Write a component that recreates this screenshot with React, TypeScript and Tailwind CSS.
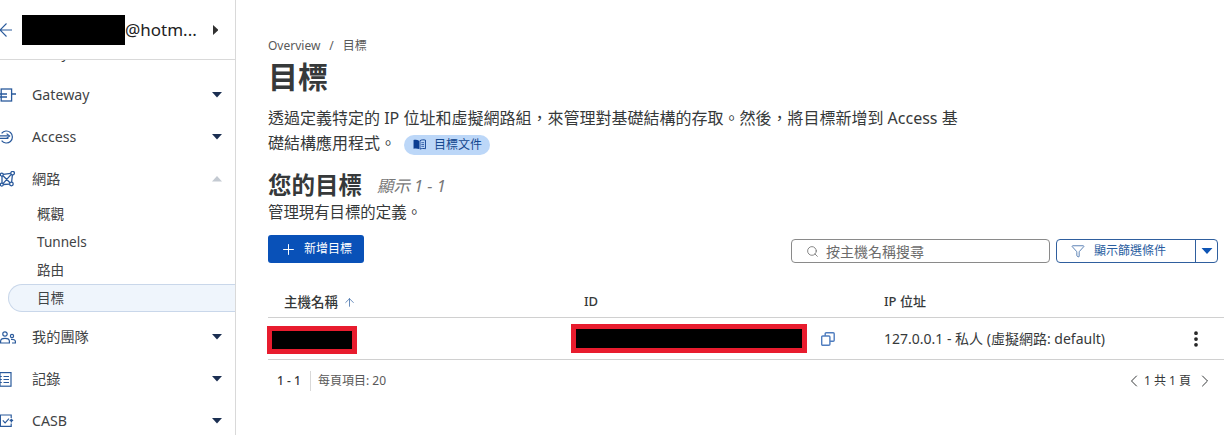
import { ChevronLeft, ChevronRight, Plus, Search, Funnel, ArrowUp, EllipsisVertical } from "lucide-react";

function Caret(props: { dir: "down" | "up" | "right"; className?: string }) {
	const points =
		props.dir === "down" ? "0,0 10,0 5,5.5" : props.dir === "up" ? "0,5.5 10,5.5 5,0" : "0,0 5.5,5 0,10";
	const box = props.dir === "right" ? "0 0 5.5 10" : "0 0 10 5.5";
	return (
		<svg viewBox={box} className={props.className} fill="currentColor">
			<polygon points={points} />
		</svg>
	);
}

function GatewayIcon() {
	return (
		<svg viewBox="0 0 16 14" className="h-[14px] w-[16px]" fill="none" stroke="#2a5a9c" strokeWidth="1.3">
			<rect x="1.2" y="1" width="10.4" height="12" />
			<path d="M0 6h7M0 9h7M11.6 6h4.4" />
		</svg>
	);
}

function AccessIcon() {
	return (
		<svg viewBox="0 0 14 14" className="h-[14px] w-[14px]" fill="none" stroke="#2a5a9c" strokeWidth="1.2">
			<path d="M1.6 3.4A6 6 0 1 1 1.6 10.6" />
			<path d="M0 5.8h8.4M0 8.4h8.4" />
			<path d="M6.6 3.6l3 2.4-3 2.4" />
		</svg>
	);
}

function NetworkIcon() {
	return (
		<svg viewBox="0 0 15 16" className="h-[16px] w-[15px]" fill="none" stroke="#2a5a9c" strokeWidth="1.3">
			<circle cx="1.8" cy="3.6" r="1.5" />
			<circle cx="12.6" cy="2.2" r="1.8" />
			<circle cx="1.8" cy="13.6" r="1.5" />
			<circle cx="11.4" cy="13" r="1.8" />
			<path d="M3.3 3.4L10.8 2.4M2 5.1v7M3.3 13.5l6.3-.4M12.4 4l-.8 7.2M3 4.7l7 7M11.2 3.4L3 12.6" />
		</svg>
	);
}

function TeamIcon() {
	return (
		<svg viewBox="0 0 16 13" className="h-[13px] w-[16px]" fill="none" stroke="#2a5a9c" strokeWidth="1.2">
			<circle cx="5" cy="3" r="2.2" />
			<circle cx="12" cy="5" r="1.6" />
			<path d="M0.6 12v-1.8C0.6 8.4 2.4 7.4 5 7.4s4.4 1 4.4 2.8V12zM11 8.4c2.6-.2 4.4.6 4.4 2V12h-3.4" />
		</svg>
	);
}

function LogIcon() {
	return (
		<svg viewBox="0 0 12 15" className="h-[15px] w-[12px]" fill="none" stroke="#2a5a9c" strokeWidth="1.2">
			<rect x="0" y="0.6" width="11" height="13.6" />
			<path d="M0 4.5h1.8M0 7.5h1.8M0 10.5h1.8M3.5 4.5h5.5M3.5 7.5h5.5M3.5 10.5h5.5" />
		</svg>
	);
}

function CasbIcon() {
	return (
		<svg viewBox="0 0 14 14" className="h-[14px] w-[14px]" fill="none" stroke="#2a5a9c" strokeWidth="1.2">
			<path d="M11.2 4V1H0.4v11.4h10.8v-3" />
			<path d="M2.8 6.4l2.3 2.4 3.9-4.2M11.4 8.6V5.6M9.8 7l1.6-1.6L13 7" />
		</svg>
	);
}

function BookIcon() {
	return (
		<svg viewBox="0 0 14 12" className="h-[11px] w-[13px]">
			<path d="M0.5 1.2C2.4 0.7 4.8 0.8 6.5 1.8V11C4.8 10.2 2.4 10.2 0.5 10.6z" fill="#0b3d91" />
			<path d="M7.5 1.8C9.2 0.8 11.6 0.7 13.5 1.2v9.4C11.6 10.2 9.2 10.2 7.5 11z" fill="none" stroke="#0b3d91" strokeWidth="1" />
			<path d="M9 4h3M9 6h3M9 8h3" stroke="#0b3d91" strokeWidth="0.8" />
		</svg>
	);
}

function CopyIcon() {
	return (
		<svg viewBox="0 0 14 14" className="h-[14px] w-[14px]" fill="none" stroke="#4f7dbf" strokeWidth="1.4">
			<rect x="0.7" y="4" width="8.2" height="9.3" rx="1" />
			<path d="M4.2 4V1.8a1 1 0 0 1 1-1h7a1 1 0 0 1 1 1v6.4a1 1 0 0 1-1 1H9" />
		</svg>
	);
}

function NavRow(props: { label: string; icon?: React.ReactNode; open?: boolean }) {
	return (
		<div className="flex h-[42px] items-center text-[14.2px] text-[#3f4345]">
			<div className="flex w-[32px] shrink-0 items-center">{props.icon}</div>
			<span className="-mt-px flex-1">{props.label}</span>
			<Caret
				dir={props.open ? "up" : "down"}
				className={`mr-[13px] h-[5.5px] w-[10px] ${props.open ? "text-[#c4cad2]" : "text-[#1b2f52]"}`}
			/>
		</div>
	);
}

function SubRow(props: { label: string; active?: boolean }) {
	return (
		<div
			className={`ml-[8px] flex h-[28px] items-center text-[13.6px] text-[#3f4345] ${
				props.active
					? "-mr-px rounded-l-full border border-r-0 border-[#c9d7ea] bg-[#eff5fc] pl-[28px]"
					: "pl-[29px]"
			}`}
		>
			{props.label}
		</div>
	);
}

function Sidebar() {
	return (
		<aside className="flex h-[435px] w-[236px] shrink-0 flex-col overflow-hidden border-r border-[#d9d9d9]">
			<div className="flex h-[60px] shrink-0 items-center border-b border-[#d9d9d9]">
				<svg viewBox="0 0 12 14" className="h-[14px] w-[12px] shrink-0" fill="none" stroke="#2a5a9c" strokeWidth="1.1">
					<path d="M12 7H0M6.5 0.5L0 7l6.5 6.5" />
				</svg>
				<div className="ml-[10px] h-[30px] w-[103px] shrink-0 bg-black" />
				<span className="flex-1 text-[17px] text-[#222]">@hotm...</span>
				<Caret dir="right" className="mr-[17px] h-[10px] w-[5.5px] text-[#313131]" />
			</div>
			<div className="min-h-0 flex-1 overflow-hidden">
				<div className="-mt-[28px]">
					<NavRow label="Analytics" icon={<AccessIcon />} />
					<NavRow label="Gateway" icon={<GatewayIcon />} />
					<NavRow label="Access" icon={<AccessIcon />} />
					<NavRow label="網路" icon={<NetworkIcon />} open />
					<SubRow label="概觀" />
					<SubRow label="Tunnels" />
					<SubRow label="路由" />
					<SubRow label="目標" active />
					<div className="h-[4px]" />
					<NavRow label="我的團隊" icon={<TeamIcon />} />
					<NavRow label="記錄" icon={<LogIcon />} />
					<NavRow label="CASB" icon={<CasbIcon />} />
				</div>
			</div>
		</aside>
	);
}

function Main() {
	return (
		<main className="min-w-0 flex-1 pl-[32px] pr-[3px] pt-[38px]">
			<div className="flex h-[15px] items-center gap-[9px] text-[12px] text-[#595959]">
				<span>Overview</span>
				<span>/</span>
				<span>目標</span>
			</div>
			<h1 className="mt-[5px] h-[38px] text-[30px] leading-[38px] font-bold text-[#36393a]">目標</h1>
			<p className="mt-[10px] w-[700px] text-[16px] leading-[25px] text-[#36393a]">
				透過定義特定的 IP 位址和虛擬網路組，來管理對基礎結構的存取。然後，將目標新增到 Access 基礎結構應用程式。
				<span className="ml-[8px] inline-flex h-[20px] items-center gap-[8px] rounded-full bg-[#bcd7f8] pr-[8px] pl-[9px] align-middle text-[12px] leading-none text-[#14488f]">
					<BookIcon />
					目標文件
				</span>
			</p>
			<div className="mt-[15px] flex h-[30px] items-center">
				<h2 className="text-[23.5px] font-bold text-[#36393a]">您的目標</h2>
				<span className="ml-[15px] text-[16.4px] text-[#777] italic">顯示 1 - 1</span>
			</div>
			<p className="mt-[2px] text-[15.4px] leading-[20px] text-[#36393a]">管理現有目標的定義。</p>
			<div className="mt-[12px] mr-[6px] flex items-start justify-between">
				<button className="flex h-[28px] w-[96px] items-center gap-[7px] rounded-[3px] bg-[#0951b8] pl-[12px] text-[12px] text-white">
					<Plus size={17} strokeWidth={1.4} />
					新增目標
				</button>
				<div className="mt-[4px] flex items-center">
					<div className="flex h-[24px] w-[259px] items-center gap-[7px] rounded-[4px] border border-[#8a8a8a] pl-[14px] text-[14px] text-[#6c6c6c]">
						<Search size={13} strokeWidth={1.5} />
						按主機名稱搜尋
					</div>
					<div className="ml-[6px] flex h-[24px] w-[162px] rounded-[4px] border border-[#2f5f9e] text-[12px] text-[#2a5d9f]">
						<div className="flex w-[139px] items-center gap-[9px] border-r border-[#2f5f9e] pl-[14px]">
							<Funnel size={14} strokeWidth={1.3} />
							顯示篩選條件
						</div>
						<div className="flex flex-1 items-center justify-center">
							<Caret dir="down" className="h-[6px] w-[12px] text-[#0f55b4]" />
						</div>
					</div>
				</div>
			</div>
			<div className="mt-[28px] flex h-[27px] items-start border-b border-[#d0d0d0] pt-px text-[13px] font-medium text-[#36393a]">
				<div className="flex w-[316px] items-center gap-[5px] pl-[16px]">
					<span className="text-[13.5px]">主機名稱</span>
					<ArrowUp size={13} strokeWidth={1.3} className="text-[#2a5d9f]" />
				</div>
				<div className="w-[300px]">ID</div>
				<div>IP 位址</div>
			</div>
			<div className="flex h-[42px] items-center border-b border-[#d0d0d0] text-[14px] text-[#36393a]">
				<div className="w-[303px]">
					<div className="mt-[2px] -ml-px h-[28px] w-[90px] border-[5px] border-[#e81c2e] bg-black" />
				</div>
				<div className="flex w-[313px] items-center">
					<div className="h-[29px] w-[236px] border-[5px] border-[#e81c2e] bg-black" />
					<span className="ml-[14px]">
						<CopyIcon />
					</span>
				</div>
				<div className="-mt-px flex-1">127.0.0.1 - 私人 (虛擬網路: default)</div>
				<EllipsisVertical size={20} strokeWidth={2.5} className="mr-[18px] text-[#222]" />
			</div>
			<div className="mt-[11px] flex h-[20px] items-center text-[12px] text-[#595959]">
				<span className="w-[42px] pl-[9px] font-medium text-[#36393a]">1 - 1</span>
				<span className="h-[20px] w-px bg-[#d9d9d9]" />
				<span className="ml-[7px] flex-1">每頁項目: 20</span>
				<ChevronLeft size={20} strokeWidth={1.2} className="-ml-px text-[#36393a]" />
				<span className="mr-[4px] text-[#36393a]">1 共 1 頁</span>
				<ChevronRight size={20} strokeWidth={1.2} className="mr-[9px] text-[#36393a]" />
			</div>
		</main>
	);
}

export default function App() {
	return (
		<div className="flex h-[435px] w-[1227px] overflow-hidden bg-white font-['Noto_Sans','Noto_Sans_CJK_TC',sans-serif]">
			<Sidebar />
			<Main />
		</div>
	);
}
